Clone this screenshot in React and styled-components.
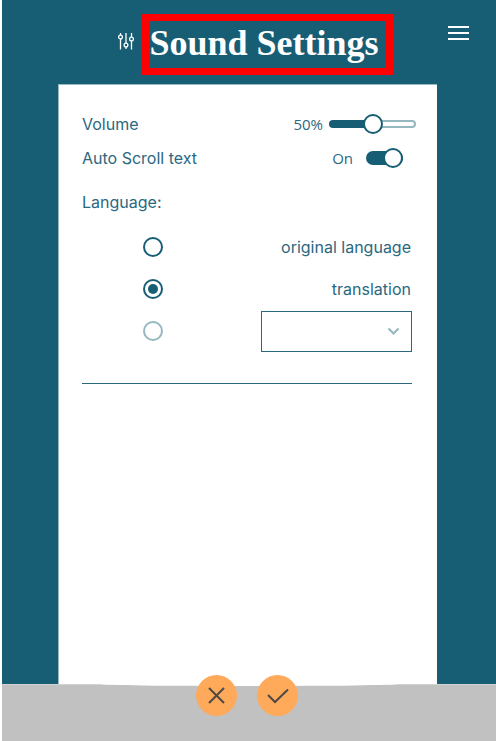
import React, { useState } from "react";
import styled, { createGlobalStyle } from "styled-components";

const teal = "#175e75";
const paleTeal = "#97b7c1";
const textTeal = "#2a687f";

const GlobalStyle = createGlobalStyle`
  *, *::before, *::after { box-sizing: border-box; }
  body {
    margin: 0;
    background: #fff;
    color: ${textTeal};
    font: 16px/20px Inter, "Liberation Sans", sans-serif;
  }
  input, select, button { margin: 0; padding: 0; font: inherit; color: inherit; }
`;

const Page = styled.div`
  display: flex;
  flex-direction: column;
  min-height: 100vh;
  margin-left: 2px;
  background: ${teal};
`;

const Header = styled.header`
  display: grid;
  grid-template-columns: 1fr auto 1fr;
  align-items: start;
  padding: 14px 27px 9px 40px;
  color: #fff;
`;

const Heading = styled.div`
  grid-column: 2;
  display: flex;
  align-items: flex-start;
  gap: 8px;
`;

const SlidersIcon = styled.svg`
  width: 16px;
  height: 17px;
  margin-top: 19px;
  fill: none;
  stroke: #fff;
`;

const Title = styled.h1`
  margin: 0;
  padding: 0 7px 3px 0;
  border: 7px solid #f00;
  font: bold 36px/44px "Liberation Serif", serif;
  white-space: nowrap;
`;

const MenuButton = styled.button`
  justify-self: end;
  display: flex;
  margin-top: 11px;
  border: 0;
  background: none;
  cursor: pointer;
`;

const Card = styled.main`
  flex: 1;
  margin: 0 59px 0 56px;
  padding: 29px 25px 24px 23px;
  border: solid ${paleTeal};
  border-width: 1px 0 0 1px;
  background: #fff;
`;

const SettingRow = styled.div`
  display: flex;
  align-items: center;
  justify-content: space-between;
  height: 20px;
  margin-bottom: 14px;
`;

const Control = styled.div`
  display: flex;
  align-items: center;
  gap: ${(p) => p.$gap};
  margin-right: ${(p) => p.$inset};
`;

const ValueText = styled.output`
  font: 15px/20px "Open Sans", "Noto Sans", sans-serif;
`;

const Slider = styled.input`
  appearance: none;
  width: 87px;
  height: 20px;
  background: none;
  cursor: pointer;

  &::-webkit-slider-runnable-track {
    height: 8px;
    border: 2px solid transparent;
    border-radius: 4px;
    background:
      linear-gradient(to right, ${teal} var(--level), #fff var(--level)) padding-box,
      linear-gradient(to right, ${teal} var(--level), ${paleTeal} var(--level)) border-box;
  }
  &::-webkit-slider-thumb {
    appearance: none;
    width: 20px;
    height: 20px;
    margin-top: -8px;
    border: 2px solid ${teal};
    border-radius: 50%;
    background: #fff;
  }
`;

const Switch = styled.input`
  appearance: none;
  display: flex;
  align-items: center;
  justify-content: ${(p) => (p.checked ? "flex-end" : "flex-start")};
  width: 37px;
  height: 14px;
  border-radius: 7px;
  background: ${(p) => (p.checked ? teal : paleTeal)};
  cursor: pointer;

  &::before {
    content: "";
    flex: none;
    width: 20px;
    height: 20px;
    border: 2px solid ${teal};
    border-radius: 50%;
    background: #fff;
  }
`;

const LanguageGroup = styled.fieldset`
  min-width: 0;
  margin: 24px 0 0;
  padding: 0 0 31px;
  border: 0;
  border-bottom: 1px solid ${textTeal};
`;

const Legend = styled.legend`
  padding: 0;
  margin-bottom: 14px;
`;

const Option = styled.div`
  display: flex;
  align-items: center;
  justify-content: space-between;
  height: 42px;
  padding-left: 61px;
`;

const OptionLabel = styled.label`
  padding-right: 1px;
`;

const Radio = styled.input`
  appearance: none;
  display: grid;
  place-content: center;
  width: 20px;
  height: 20px;
  border: 2px solid ${(p) => (p.disabled ? paleTeal : teal)};
  border-radius: 50%;

  &:checked::before {
    content: "";
    width: 10px;
    height: 10px;
    border-radius: 50%;
    background: ${teal};
  }
`;

const SelectBox = styled.div`
  display: grid;
  align-items: center;
  width: 151px;
  height: 41px;
  border: 1px solid ${textTeal};

  & > * { grid-area: 1 / 1; }
`;

const Select = styled.select`
  appearance: none;
  width: 100%;
  height: 100%;
  border: 0;
  background: none;
`;

const Chevron = styled.svg`
  justify-self: end;
  margin-right: 11px;
  pointer-events: none;
`;

const Footer = styled.footer`
  position: relative;
  display: flex;
  justify-content: center;
  gap: 20px;
  height: 57px;
  padding-right: 4px;
  border-top: 1px solid #d2d2d2;
  background: #c1c1c1;

  &::before {
    content: "";
    position: absolute;
    top: -1px;
    left: 20%;
    right: 20%;
    height: 2px;
    border-radius: 0 0 50% 50% / 0 0 100% 100%;
    background: #fff;
  }
`;

const RoundButton = styled.button`
  position: relative;
  display: grid;
  place-items: center;
  width: 41px;
  height: 41px;
  margin-top: -10px;
  border: 0;
  border-radius: 50%;
  background: #ffa95b;
  cursor: pointer;
`;

export default function App() {
  const [volume, setVolume] = useState(50);
  const [autoScroll, setAutoScroll] = useState(true);
  const [language, setLanguage] = useState("translation");

  return (
    <>
      <GlobalStyle />
      <Page>
        <Header>
          <Heading>
            <SlidersIcon viewBox="0 0 16 17" strokeWidth="1.3" aria-hidden="true">
              <path d="M2.5 0v2M2.5 6v10.500M8 0v10M8 14v2M13.500 0v4M13.500 8v8.500" />
              <circle cx="2.500" cy="4" r="1.900" />
              <circle cx="8" cy="12" r="1.900" />
              <circle cx="13.500" cy="6" r="1.900" />
            </SlidersIcon>
            <Title>Sound Settings</Title>
          </Heading>
          <MenuButton aria-label="Menu">
            <svg width="21" height="16" viewBox="0 0 21 16" fill="#fff" aria-hidden="true">
              <path d="M0 1h21v2H0zM0 7h21v2H0zM0 13h21v2H0z" />
            </svg>
          </MenuButton>
        </Header>

        <Card>
          <SettingRow>
            <label htmlFor="volume">Volume</label>
            <Control $gap="6px" $inset="-4px">
              <ValueText htmlFor="volume">{volume}%</ValueText>
              <Slider
                id="volume"
                type="range"
                value={volume}
                style={{ "--level": `${volume}%` }}
                onChange={(e) => setVolume(Number(e.target.value))}
              />
            </Control>
          </SettingRow>
          <SettingRow>
            <label htmlFor="auto-scroll">Auto Scroll text</label>
            <Control $gap="13px" $inset="9px">
              <ValueText htmlFor="auto-scroll">{autoScroll ? "On" : "Off"}</ValueText>
              <Switch
                id="auto-scroll"
                type="checkbox"
                role="switch"
                checked={autoScroll}
                onChange={(e) => setAutoScroll(e.target.checked)}
              />
            </Control>
          </SettingRow>

          <LanguageGroup>
            <Legend>Language:</Legend>
            {["original language", "translation"].map((name) => (
              <Option key={name}>
                <Radio
                  id={name.replace(" ", "-")}
                  type="radio"
                  name="language"
                  checked={language === name}
                  onChange={() => setLanguage(name)}
                />
                <OptionLabel htmlFor={name.replace(" ", "-")}>{name}</OptionLabel>
              </Option>
            ))}
            <Option>
              <Radio type="radio" name="language" disabled aria-label="Other language" />
              <SelectBox>
                <Select aria-label="Choose a language" />
                <Chevron width="13" height="9" viewBox="0 0 13 9" fill="none" stroke={paleTeal} strokeWidth="2.200" aria-hidden="true">
                  <path d="M1.500 1.500l5 5 5-5" />
                </Chevron>
              </SelectBox>
            </Option>
          </LanguageGroup>
        </Card>

        <Footer>
          <RoundButton aria-label="Cancel">
            <svg width="17" height="17" viewBox="0 0 17 17" fill="none" stroke="#4d4a46" strokeWidth="2" aria-hidden="true">
              <path d="M1 1l15 15M16 1L1 16" />
            </svg>
          </RoundButton>
          <RoundButton aria-label="Confirm">
            <svg width="22" height="16" viewBox="0 0 22 16" fill="none" stroke="#4d4a46" strokeWidth="2" aria-hidden="true">
              <path d="M1 7l7 7L21 1.500" />
            </svg>
          </RoundButton>
        </Footer>
      </Page>
    </>
  );
}
